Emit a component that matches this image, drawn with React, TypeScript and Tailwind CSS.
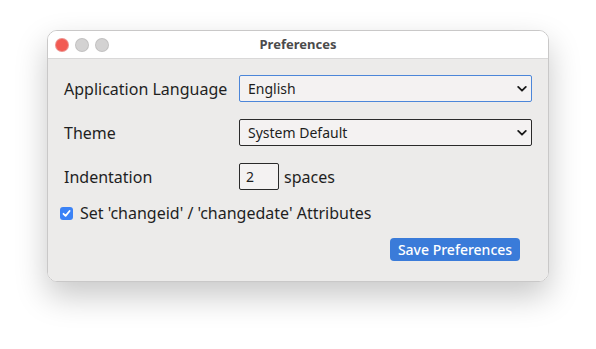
import { useState } from "react";

function Chevron() {
  return (
    <svg
      width="10"
      height="7"
      viewBox="0 0 10 7"
      className="pointer-events-none absolute right-[5px] top-1/2 -translate-y-1/2"
    >
      <path d="M1.2 1.4 5 5.2 8.8 1.4" fill="none" stroke="#1a1a1a" strokeWidth="1.8" strokeLinecap="round" strokeLinejoin="round" />
    </svg>
  );
}

function Select({
  value,
  options,
  focused,
}: {
  value: string;
  options: string[];
  focused?: boolean;
}) {
  const [v, setV] = useState(value);
  return (
    <div className="relative">
      <select
        value={v}
        onChange={(e) => setV(e.target.value)}
        className={`h-[27px] w-full appearance-none rounded-[2px] border bg-[#f4f2f2] pl-[8px] text-[14px] text-[#1d1d1d] outline-none ${
          focused ? "border-[#4c86d9]" : "border-[#2a2a2a]"
        }`}
      >
        {options.map((o) => (
          <option key={o}>{o}</option>
        ))}
      </select>
      <Chevron />
    </div>
  );
}

export default function App() {
  const [indent, setIndent] = useState("2");
  const [stamp, setStamp] = useState(true);

  return (
    <div
      className="h-[349px] w-[596px] bg-white pl-[47px] pt-[30px]"
      style={{ fontFamily: '"Noto Sans", "DejaVu Sans", sans-serif' }}
    >
      <div className="flex h-[252px] w-[502px] flex-col overflow-hidden rounded-[10px] border border-[#c9c8c8] shadow-[0_14px_32px_rgba(0,0,0,0.22)]">
        <div className="grid h-[28px] shrink-0 grid-cols-[1fr_auto_1fr] items-center border-b border-[#d9d8d8] bg-white">
          <div className="flex gap-[8px] pl-[8px]">
            <span className="h-[12px] w-[12px] rounded-full bg-[#f25a52] ring-1 ring-[#e0443e]/60" />
            <span className="h-[12px] w-[12px] rounded-full bg-[#d3d2d2] ring-1 ring-[#c2c1c1]" />
            <span className="h-[12px] w-[12px] rounded-full bg-[#d3d2d2] ring-1 ring-[#c2c1c1]" />
          </div>
          <div className="text-[13px] font-bold text-[#4b4b4b]">Preferences</div>
          <div />
        </div>

        <div className="flex flex-1 flex-col bg-[#ecebea] px-[16px] pt-[16px] text-[16px] text-[#1f1f1f]">
          <div className="grid grid-cols-[175px_1fr] items-center gap-y-[17px]">
            <label>Application Language</label>
            <Select value="English" options={["English", "Deutsch", "Français"]} focused />
            <label>Theme</label>
            <Select value="System Default" options={["System Default", "Light", "Dark"]} />
            <label>Indentation</label>
            <div className="flex items-center gap-[5px]">
              <input
                value={indent}
                onChange={(e) => setIndent(e.target.value)}
                className="h-[27px] w-[40px] rounded-[2px] border border-[#2a2a2a] bg-[#f4f2f2] px-[6px] text-[14px] outline-none"
              />
              <span>spaces</span>
            </div>
          </div>

          <label className="-ml-[4px] mt-[11px] flex items-center gap-[7px]">
            <button
              type="button"
              onClick={() => setStamp(!stamp)}
              className={`flex h-[13px] w-[13px] items-center justify-center rounded-[3px] ${
                stamp ? "bg-[#3b82f6]" : "border border-[#888] bg-white"
              }`}
            >
              {stamp && (
                <svg width="9" height="9" viewBox="0 0 9 9">
                  <path d="M1.5 4.8 3.6 6.9 7.6 2" fill="none" stroke="white" strokeWidth="1.8" strokeLinecap="round" strokeLinejoin="round" />
                </svg>
              )}
            </button>
            <span>Set 'changeid' / 'changedate' Attributes</span>
          </label>

          <div className="mt-[13px] flex justify-end pr-[12px]">
            <button
              type="button"
              className="h-[23px] w-[130px] rounded-[4px] bg-[#3a7bd9] text-[14px] font-medium text-white"
            >
              Save Preferences
            </button>
          </div>
        </div>
      </div>
    </div>
  );
}
